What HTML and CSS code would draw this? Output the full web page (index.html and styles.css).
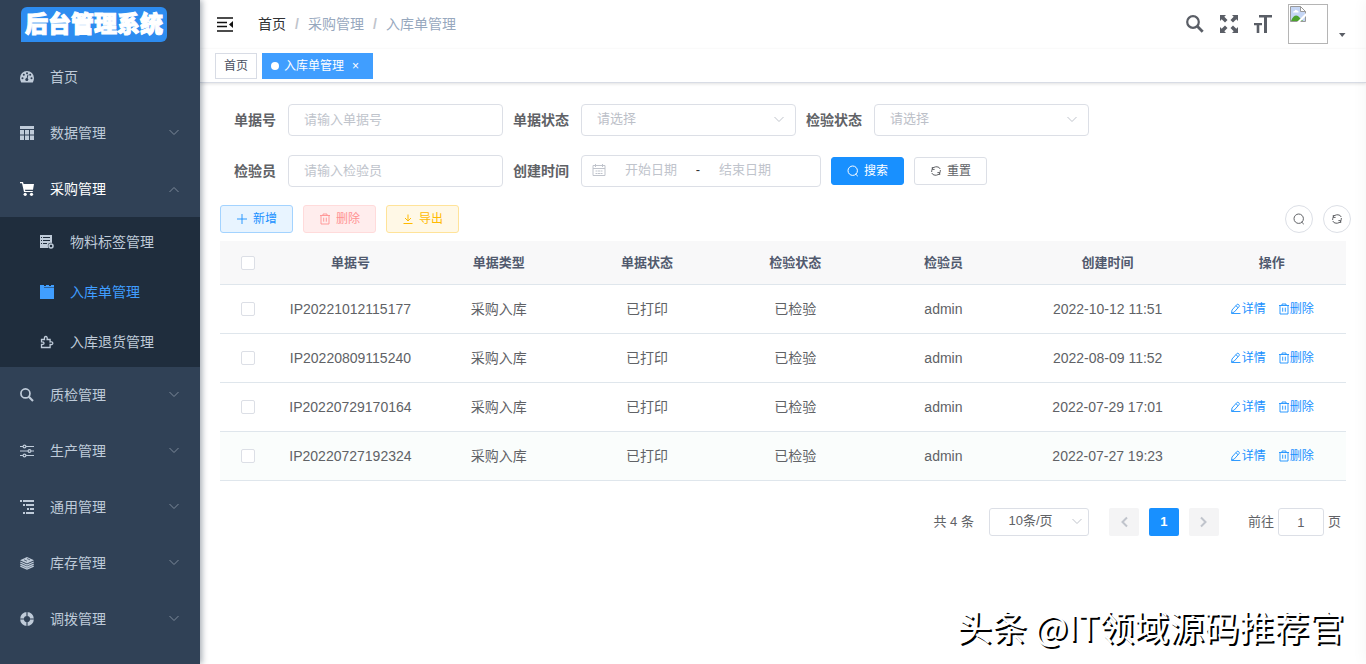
FILE: index.html
```html
<!DOCTYPE html>
<html lang="zh-CN">
<head>
<meta charset="utf-8">
<meta name="viewport" content="width=device-width, initial-scale=1">
<title>入库单管理</title>
<link rel="stylesheet" href="styles.css">
</head>
<body>
<svg class="sprite" aria-hidden="true">
  <symbol id="i-down" viewBox="0 0 12 12"><path d="M1.500 3l4.500 4.500L10.500 3" fill="none" stroke="currentColor"/></symbol>
  <symbol id="i-search" viewBox="0 0 18 18"><circle cx="7" cy="7" r="5.800" fill="none" stroke="currentColor" stroke-width="2.200"/><path d="M11.300 11.300l5.400 5.400" stroke="currentColor" stroke-width="2.800"/></symbol>
  <symbol id="i-find" viewBox="0 0 12 12"><circle cx="5.700" cy="5.700" r="4.700" fill="none" stroke="currentColor"/><path d="M8.600 9l2.200 2.200" stroke="currentColor"/></symbol>
  <symbol id="i-refresh" viewBox="0 0 12 12"><path d="M2.300 4.400V2M2.300 4.400h2.300M1.700 7V5.800a4 4 0 0 1 4-4h1.300a3.500 3.500 0 0 1 3.200 2.200M9.700 7.600V10M9.700 7.600H7.400M10.300 5v1.200a4 4 0 0 1-4 4H5a3.500 3.500 0 0 1-3.200-2.200" fill="none" stroke="currentColor"/></symbol>
  <symbol id="i-trash" viewBox="0 0 12 12"><path d="M1 2.500h10M4 2.500V1h4v1.500M2 2.500v8.500h8V2.500M4.700 4.700v4M7.300 4.700v4" fill="none" stroke="currentColor" stroke-width=".9"/></symbol>
  <symbol id="i-edit" viewBox="0 0 12 12"><path d="M1.500 10.200l.5-3.200L6.800 1.600q1-.8 1.900 0t.4 2L4.300 9zM5.900 2.700l2.100 1.900M1.500 10.500h9" fill="none" stroke="currentColor" stroke-width=".9"/></symbol>
</svg>
<div class="app">
  <aside class="sidebar">
    <div class="brand"><span class="brand-name">后台管理系统</span></div>
    <nav>
      <a class="item" href="#"><svg class="ico" viewBox="0 0 14 14"><path d="M0 8a7 7 0 0 1 14 0q0 2.500-1.200 4.400H1.200Q0 10.500 0 8z" fill="currentColor"/><g fill="#304156"><circle cx="2.500" cy="8.200" r="1"/><circle cx="3.800" cy="4.800" r="1"/><circle cx="7" cy="3.300" r="1"/><circle cx="10.200" cy="4.800" r="1"/><circle cx="11.500" cy="8.200" r="1"/><circle cx="6.800" cy="9.600" r="1.500"/></g><path d="M6.800 9.600l1.200-5" stroke="#304156"/></svg>首页</a>
      <a class="item" href="#"><svg class="ico" viewBox="0 0 14 14"><path d="M0 0h14v3H0zM0 4h4v4.500H0zM5 4h4v4.500H5zM10 4h4v4.500h-4zM0 9.500h4V14H0zM5 9.500h4V14H5zM10 9.500h4V14h-4z" fill="currentColor"/></svg>数据管理<svg class="arrow"><use href="#i-down"/></svg></a>
      <a class="item open" href="#"><svg class="ico" viewBox="0 0 14 14"><path d="M0 0h3l.6 2H14l-1 5.800H5l.3 1.200h7.500v1H4L2 1.300H0z" fill="currentColor"/><circle cx="5.200" cy="12.300" r="1.600" fill="currentColor"/><circle cx="11.500" cy="12.300" r="1.600" fill="currentColor"/></svg>采购管理<svg class="arrow"><use href="#i-down"/></svg></a>
      <div class="submenu">
        <a class="item" href="#"><svg class="ico" viewBox="0 0 14 14"><path d="M0 0h12v13H0z" fill="currentColor"/><path d="M3 2.500h7M3 5.500h7M3 8.500h4M1 2.500h1M1 5.500h1M1 8.500h1" stroke="#1f2d3d"/><circle cx="11" cy="11" r="3.200" fill="#1f2d3d"/><circle cx="11" cy="11" r="2" fill="none" stroke="currentColor" stroke-width="1.500"/></svg>物料标签管理</a>
        <a class="item active" href="#"><svg class="ico" viewBox="0 0 14 14"><path d="M0 0h4v1h2V0h3v1h2V0h3v14H0z" fill="currentColor"/><path d="M4 2.500h10" stroke="#1f2d3d" opacity=".5"/></svg>入库单管理</a>
        <a class="item" href="#"><svg class="ico" viewBox="0 0 14 14"><path d="M1.500 4.500h3q-.5-3 1.300-3t1.300 3h3v2.400q2.700-.5 2.700 1.300t-2.700 1.300v3H1.500v-3q2.500.2 2.500-1.300t-2.500-1.300z" fill="none" stroke="currentColor" stroke-width="1.300"/></svg>入库退货管理</a>
      </div>
      <a class="item" href="#"><svg class="ico"><use href="#i-search"/></svg>质检管理<svg class="arrow"><use href="#i-down"/></svg></a>
      <a class="item" href="#"><svg class="ico" viewBox="0 0 14 14"><path d="M0 2.500h14M0 7h14M0 11.500h14" stroke="currentColor"/><g fill="#304156" stroke="currentColor" stroke-width="1.200"><circle cx="4.500" cy="2.500" r="1.400"/><circle cx="9.500" cy="7" r="1.400"/><circle cx="4.500" cy="11.500" r="1.400"/></g></svg>生产管理<svg class="arrow"><use href="#i-down"/></svg></a>
      <a class="item" href="#"><svg class="ico" viewBox="0 0 14 14"><path d="M0 1h2M3 1h11M3 5h2M6 5h8M7 9h2M10 9h4M3 13h2M6 13h8" stroke="currentColor" stroke-width="2"/></svg>通用管理<svg class="arrow"><use href="#i-down"/></svg></a>
      <a class="item" href="#"><svg class="ico" viewBox="0 0 14 14"><path d="M0 4.200l7-3.200 7 3.200-7 3.300z" fill="currentColor"/><path d="M.3 6l6.700 3L13.700 6M.3 8.200l6.700 3 6.700-3M.3 10.200l6.700 2.800 6.700-2.800" fill="none" stroke="currentColor" stroke-width="1.300"/><path d="M4 3.800l3 1.400M7 2.500l3 1.400" stroke="#304156" stroke-width=".7"/></svg>库存管理<svg class="arrow"><use href="#i-down"/></svg></a>
      <a class="item" href="#"><svg class="ico" viewBox="0 0 14 14"><circle cx="7" cy="7" r="5" fill="none" stroke="currentColor" stroke-width="3.800"/><path d="M7 0v4M7 10v4M0 7h4M10 7h4" stroke="#304156" stroke-width="1.200"/></svg>调拨管理<svg class="arrow"><use href="#i-down"/></svg></a>
    </nav>
  </aside>

  <div class="main">
    <header class="navbar">
      <button class="plain" aria-label="折叠菜单"><svg width="16" height="16" viewBox="0 0 16 16"><path d="M0 2h16M0 6.500h10M0 10.500h10M0 15h16" stroke="#111" stroke-width="1.600"/><path d="M16 5v7l-4-3.500z" fill="#111"/></svg></button>
      <nav class="crumbs"><a href="#">首页</a><i>/</i><span>采购管理</span><i>/</i><span>入库单管理</span></nav>
      <div class="tools">
        <button class="plain" aria-label="搜索"><svg width="18" height="18"><use href="#i-search"/></svg></button>
        <button class="plain" aria-label="全屏"><svg width="18" height="18" viewBox="0 0 18 18"><path d="M0 0h6L4.300 1.700 7.500 5 5 7.500 1.700 4.300 0 6zM18 0v6l-1.700-1.700L13 7.500 10.500 5l3.200-3.300L12 0zM0 18v-6l1.700 1.700L5 10.500 7.500 13l-3.200 3.300L6 18zM18 18h-6l1.700-1.700-3.200-3.300 2.500-2.500 3.300 3.200L18 12z" fill="currentColor"/></svg></button>
        <button class="plain" aria-label="字号"><svg width="18" height="18" viewBox="0 0 18 18"><path d="M5 0h13v2.500h-5V18h-3V2.500H5zM0 8h8v2.200H5.300V18H2.700v-7.800H0z" fill="currentColor"/></svg></button>
        <button class="plain user" aria-label="用户"><span class="avatar"><svg width="16" height="16" viewBox="0 0 16 16"><path d="M.5.500h10l5 5v10H.5z" fill="#c5d6f5" stroke="#999"/><path d="M10.500.500v5h5z" fill="#fff" stroke="#999"/><path d="M3 6.500q0-1.800 1.600-1.500Q5.500 3 7 4.500q2 0 1.500 2z" fill="#fff"/><path d="M1 15q3-7 7-5l5 5z" fill="#4ca32e"/><path d="M7 16l9-9v3l-6 6z" fill="#fff"/></svg></span><svg class="caret" width="8" height="4" viewBox="0 0 8 4"><path d="M1 0h6.500L4.200 4z" fill="currentColor"/></svg></button>
      </div>
    </header>
    <div class="tabs"><a class="tab" href="#">首页</a><a class="tab current" href="#">入库单管理<span class="close">×</span></a></div>

    <main class="content">
      <form class="filters">
        <div class="field"><label for="no">单据号</label><input class="box" id="no" placeholder="请输入单据号"></div>
        <div class="field"><label for="st">单据状态</label><span class="pick"><select class="box" id="st"><option>请选择</option></select><svg><use href="#i-down"/></svg></span></div>
        <div class="field"><label for="ck">检验状态</label><span class="pick"><select class="box" id="ck"><option>请选择</option></select><svg><use href="#i-down"/></svg></span></div>
        <div class="field"><label for="who">检验员</label><input class="box" id="who" placeholder="请输入检验员"></div>
        <div class="field"><label for="from">创建时间</label><div class="box range"><svg width="14" height="14" viewBox="0 0 14 14"><path d="M1 2.500h12v10H1zM1 5.500h12M3.500 1v3M10.500 1v3M3.500 8h2M6 8h2M8.500 8h2M3.500 10.500h2M6 10.500h2M8.500 10.500h2" fill="none" stroke="currentColor"/></svg><input id="from" placeholder="开始日期"><span>-</span><input aria-label="结束日期" placeholder="结束日期"></div></div>
        <button type="button" class="btn primary"><svg><use href="#i-find"/></svg>搜索</button>
        <button type="reset" class="btn"><svg><use href="#i-refresh"/></svg>重置</button>
      </form>

      <div class="toolbar">
        <button class="btn add"><svg viewBox="0 0 12 12"><path d="M6 1v10M1 6h10" stroke="currentColor" stroke-width=".9"/></svg>新增</button>
        <button class="btn del"><svg><use href="#i-trash"/></svg>删除</button>
        <button class="btn exp"><svg viewBox="0 0 12 12"><path d="M6 1.500v6.500M3 5l3 3 3-3M1.500 10.500h9" fill="none" stroke="currentColor"/></svg>导出</button>
        <div class="round-set"><button class="round" aria-label="显示搜索"><svg><use href="#i-find"/></svg></button><button class="round" aria-label="刷新"><svg><use href="#i-refresh"/></svg></button></div>
      </div>

      <table>
        <colgroup><col class="c-check"><col><col><col><col><col><col class="c-time"><col></colgroup>
        <thead><tr><th><input type="checkbox" aria-label="全选"></th><th>单据号</th><th>单据类型</th><th>单据状态</th><th>检验状态</th><th>检验员</th><th>创建时间</th><th>操作</th></tr></thead>
        <tbody>
          <tr><td><input type="checkbox" aria-label="选择"></td><td>IP20221012115177</td><td>采购入库</td><td>已打印</td><td>已检验</td><td>admin</td><td>2022-10-12 11:51</td><td><div class="ops"><a href="#"><svg><use href="#i-edit"/></svg>详情</a><a href="#"><svg><use href="#i-trash"/></svg>删除</a></div></td></tr>
          <tr><td><input type="checkbox" aria-label="选择"></td><td>IP20220809115240</td><td>采购入库</td><td>已打印</td><td>已检验</td><td>admin</td><td>2022-08-09 11:52</td><td><div class="ops"><a href="#"><svg><use href="#i-edit"/></svg>详情</a><a href="#"><svg><use href="#i-trash"/></svg>删除</a></div></td></tr>
          <tr><td><input type="checkbox" aria-label="选择"></td><td>IP20220729170164</td><td>采购入库</td><td>已打印</td><td>已检验</td><td>admin</td><td>2022-07-29 17:01</td><td><div class="ops"><a href="#"><svg><use href="#i-edit"/></svg>详情</a><a href="#"><svg><use href="#i-trash"/></svg>删除</a></div></td></tr>
          <tr class="hover"><td><input type="checkbox" aria-label="选择"></td><td>IP20220727192324</td><td>采购入库</td><td>已打印</td><td>已检验</td><td>admin</td><td>2022-07-27 19:23</td><td><div class="ops"><a href="#"><svg><use href="#i-edit"/></svg>详情</a><a href="#"><svg><use href="#i-trash"/></svg>删除</a></div></td></tr>
        </tbody>
      </table>

      <div class="pager">
        <span>共 4 条</span>
        <span class="pick size"><select class="box" aria-label="每页条数"><option>10条/页</option></select><svg><use href="#i-down"/></svg></span>
        <div class="pages">
          <button class="page" disabled aria-label="上一页"><svg class="prev"><use href="#i-down"/></svg></button>
          <button class="page on">1</button>
          <button class="page" disabled aria-label="下一页"><svg class="next"><use href="#i-down"/></svg></button>
        </div>
        <label class="jump">前往<input class="box" value="1">页</label>
      </div>
    </main>
    <div class="drawer"></div>
    <div class="watermark">头条 @IT领域源码推荐官</div>
  </div>
</div>
</body>
</html>
```
FILE: styles.css
```css
* { box-sizing: border-box; }
body {
  margin: 0;
  font: 14px/20px "Liberation Sans", "Noto Sans CJK SC", sans-serif;
  color: #606266;
  background: #fff;
}
a { color: inherit; text-decoration: none; }
button, input, select { font: inherit; color: inherit; margin: 0; }
.sprite { position: absolute; width: 0; height: 0; }
.app { display: flex; min-height: 100vh; }

.sidebar {
  flex: 0 0 200px;
  background: #304156;
  color: #bfcbd9;
  box-shadow: 2px 0 6px rgba(0, 21, 41, .35);
  z-index: 1;
}
.brand { height: 49px; padding: 7px 21px; }
.brand-name {
  display: block;
  width: 146px;
  background: #2d8cf0;
  border-radius: 6px 6px 6px 0;
  color: #fff;
  font-size: 23px;
  font-weight: 900;
  line-height: 35px;
  text-align: center;
  white-space: nowrap;
  -webkit-text-stroke: 1px #fff;
}
.item { display: flex; align-items: center; height: 56px; padding: 0 20px; }
.ico { width: 14px; height: 14px; margin-right: 16px; }
.arrow { width: 12px; height: 12px; margin-left: auto; color: #7d8a9a; }
.open { color: #fff; }
.open .arrow { transform: rotate(180deg); }
.submenu { background: #1f2d3d; }
.submenu .item { height: 50px; padding-left: 40px; }
.submenu .active { color: #409eff; }

.main { flex: 1; min-width: 0; position: relative; overflow: hidden; }
.navbar {
  display: flex;
  align-items: center;
  height: 49px;
  padding: 0 20px 2px 17px;
  box-shadow: 0 1px 4px rgba(0, 21, 41, .08);
}
.plain { display: flex; padding: 0; border: 0; background: none; }
.crumbs { display: flex; margin-left: 25px; color: #97a8be; }
.crumbs a { color: #303133; }
.crumbs i { width: 22px; text-align: center; font-style: normal; font-weight: bold; color: #c0c4cc; }
.tools { display: flex; align-items: center; gap: 16px; margin-left: auto; color: #5a5e66; }
.user { align-items: flex-end; gap: 10px; }
.avatar { width: 40px; height: 40px; padding: 1px; border: 1px solid #b5b5b5; }
.avatar svg { display: block; }
.caret { margin-bottom: 7px; }

.tabs {
  display: flex;
  gap: 5px;
  height: 34px;
  padding: 4px 15px;
  background: #fff;
  border-bottom: 1px solid #d8dce5;
  box-shadow: 0 1px 3px rgba(0, 0, 0, .12);
}
.tab {
  display: flex;
  align-items: center;
  height: 26px;
  padding: 0 8px;
  border: 1px solid #d8dce5;
  color: #495060;
  font-size: 12px;
}
.current { background: #409eff; border-color: #409eff; color: #fff; padding-right: 13px; }
.current::before { content: ""; width: 8px; height: 8px; border-radius: 50%; background: #fff; margin-right: 5px; }
.close { margin-left: 8px; }

.content { padding: 21px 20px 20px; }
.filters { display: flex; flex-wrap: wrap; align-items: center; gap: 19px 10px; }
.field { display: flex; align-items: center; }
.field label { width: 68px; padding-right: 12px; text-align: right; font-weight: bold; white-space: nowrap; }
.box {
  width: 215px;
  height: 32px;
  padding: 0 15px 2px;
  border: 1px solid #dcdfe6;
  border-radius: 4px;
  background: #fff;
  font-size: 13px;
  appearance: none;
  outline: 0;
}
::placeholder { color: #c0c4cc; opacity: 1; }
.pick { position: relative; display: flex; }
.pick select { color: #bcc0c8; }
.pick svg { position: absolute; right: 11px; top: 50%; width: 12px; height: 12px; margin-top: -6px; color: #c0c4cc; pointer-events: none; }
.range { display: flex; align-items: center; width: 240px; padding: 0 10px 2px; color: #303133; }
.range svg { flex: none; color: #c0c4cc; }
.range input { flex: 1; min-width: 0; width: 0; border: 0; padding: 0; text-align: center; outline: 0; background: none; }
.range input:last-child { margin-right: 20px; }

.btn {
  display: flex;
  align-items: center;
  justify-content: center;
  gap: 5px;
  width: 73px;
  height: 28px;
  padding: 0;
  border: 1px solid #dcdfe6;
  border-radius: 3px;
  background: #fff;
  font-size: 12px;
}
.btn svg { width: 12px; height: 12px; }
.primary { background: #1890ff; border-color: #1890ff; color: #fff; }
.toolbar { display: flex; gap: 10px; margin: 18px 0 8px; }
.add { background: #e8f4ff; border-color: #a3d3ff; color: #1890ff; }
.del { background: #ffeded; border-color: #ffdbdb; color: #ff9292; }
.exp { background: #fff8e6; border-color: #ffe399; color: #ffba00; }
.round-set { display: flex; gap: 10px; margin: 0 -5px 0 auto; }
.round { display: grid; place-items: center; width: 28px; height: 28px; padding: 0; border: 1px solid #dcdfe6; border-radius: 50%; background: #fff; }
.round svg { width: 12px; height: 12px; }

table { width: 100%; table-layout: fixed; border-collapse: separate; border-spacing: 0; text-align: center; }
.c-check { width: 5%; }
.c-time { width: 16%; }
th, td { height: 49px; padding: 0; border-bottom: 1px solid #dfe6ec; }
th { height: 44px; background: #f8f8f9; color: #515a6e; font-size: 13px; }
.hover { background: #fafdfc; }
input[type="checkbox"] { display: block; width: 14px; height: 14px; margin: 0 auto; appearance: none; border: 1px solid #dcdfe6; border-radius: 2px; background: #fff; }
.ops { display: flex; justify-content: center; gap: 12px; color: #1890ff; font-size: 12px; }
.ops a { display: flex; align-items: center; }
.ops svg { width: 12px; height: 12px; }

.pager { display: flex; justify-content: flex-end; align-items: center; margin-top: 27px; padding-right: 5px; font-size: 13px; }
.pager .box { height: 28px; border-radius: 3px; text-align: center; }
.size { margin: 0 20px 0 15px; }
.size select { width: 100px; padding: 0 25px 2px 8px; color: #606266; }
.size svg { right: 6px; }
.pages { display: flex; gap: 10px; margin-right: 29px; }
.page { display: grid; place-items: center; width: 30px; height: 28px; padding: 0; border: 0; border-radius: 2px; background: #f4f4f5; color: #c0c4cc; font-weight: bold; }
.page svg { width: 12px; height: 12px; stroke-width: 2px; }
.prev { transform: rotate(90deg); }
.next { transform: rotate(-90deg); }
.on { background: #1890ff; color: #fff; }
.jump { display: flex; align-items: center; gap: 4px; }
.jump .box { width: 46px; padding: 0 3px; }

.drawer { position: absolute; top: 0; right: -260px; width: 260px; height: 100%; box-shadow: 0 0 15px rgba(0, 0, 0, .05); }
.watermark {
  position: absolute;
  right: 22px;
  bottom: 14px;
  color: #fff;
  font: 35px/48px "Noto Sans CJK SC", sans-serif;
  text-shadow: 2px 2px 0 #000;
  white-space: nowrap;
}
```
